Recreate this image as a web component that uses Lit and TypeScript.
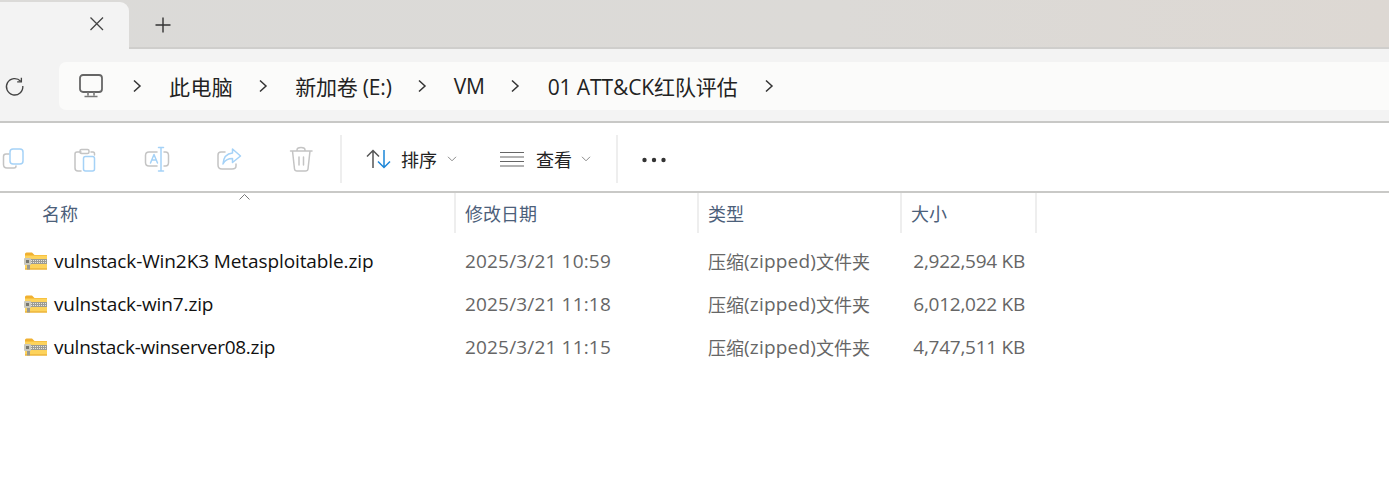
import { LitElement, html, css, svg } from "lit";
import { customElement } from "lit/decorators.js";

const chevron = html`<svg class="chev" width="10" height="14" viewBox="0 0 10 14"><path d="M2 1.5 L8 7 L2 12.5" fill="none" stroke="#333" stroke-width="1.5"/></svg>`;
const down = html`<svg class="down" width="10" height="6" viewBox="0 0 10 6"><path d="M1 .8 L5 4.8 L9 .8" fill="none" stroke="#8a8a8a" stroke-width="1"/></svg>`;
const zipIcon = html`<svg class="zip" width="24" height="20" viewBox="0 0 24 20">
  <path d="M1 3 Q1 1.5 2.5 1.5 H8 L10.5 4 H1 Z" fill="#f0b030"/>
  <rect x="1" y="4" width="22" height="14.5" fill="#fdd35c"/>
  <rect x="1" y="4" width="22" height="1" fill="#f7c140"/>
  <rect x="1" y="17.5" width="22" height="1" fill="#e3a52a"/>
  <rect x="0" y="8" width="23" height="5" fill="#9b9b94"/>
  <path d="M7 9.5 H22 M7 11.5 H22" stroke="#e8e6dc" stroke-width="1" stroke-dasharray="1 1"/>
  <rect x="0" y="7" width="7" height="7" rx="1" fill="#c9c8bd"/>
  <rect x="2" y="9" width="3" height="3" fill="#77776f"/>
  <rect x="3" y="14" width="3" height="4.5" fill="#9a9a90"/>
</svg>`;
const rows = [
  { name: "vulnstack-Win2K3 Metasploitable.zip", date: "2025/3/21 10:59", size: "2,922,594 KB", track: -0.1 },
  { name: "vulnstack-win7.zip", date: "2025/3/21 11:18", size: "6,012,022 KB", track: -0.12 },
  { name: "vulnstack-winserver08.zip", date: "2025/3/21 11:15", size: "4,747,511 KB", track: -0.27 },
];
const G = "#c4c4c4", B = "#a5d2f7";
const ic = (w: number, body: unknown) => html`<svg class="tool" width="${w}" height="28" viewBox="0 0 ${w} 28" fill="none" stroke-width="1.5" stroke-linejoin="round" stroke-linecap="round">${body}</svg>`;

@customElement("app-root")
export class AppRoot extends LitElement {
  static styles = css`
    :host { display: block; width: 1389px; height: 481px; overflow: hidden; background: #fff;
      font-family: "Open Sans", "Noto Sans CJK SC", sans-serif; color: #1a1a1a; }
    .tabs { height: 45px; padding-top: 2px; display: flex; align-items: stretch;
      background: linear-gradient(90deg, #dbdad8 0%, #dcdad7 60%, #ddd8d3 100%); border-bottom: 2px solid #cfcecc; }
    .tab { width: 129px; margin-bottom: -2px; background: #f3f3f3; border-radius: 0 9px 0 0; display: flex; align-items: center; justify-content: flex-end; padding: 0 24px 3px 0; box-sizing: border-box; }
    .plus { margin-left: 26px; align-self: center; display: flex; }
    .nav { height: 59px; padding-top: 13px; background: #f3f3f3; border-bottom: 2px solid #c8c8c6; display: flex; align-items: flex-start; }
    .refresh { width: 59px; height: 48px; padding-left: 4px; box-sizing: border-box; display: flex; align-items: center; }
    .addr { flex: 1; height: 48px; background: #fbfbfa; border-radius: 7px 0 0 7px; display: flex; align-items: center; font-size: 21px; color: #222; }
    .pc { margin-left: 20px; display: flex; }
    .crumb { white-space: nowrap; letter-spacing: -0.2px; }
    .wrap { display: flex; }
    .chev { flex: none; }
    .c1 { margin-left: 29px; } .t1 { margin-left: 27px; letter-spacing: 0.4px; }
    .c2 { margin-left: 25px; } .t2 { margin-left: 27px; }
    .c3 { margin-left: 25px; } .t3 { margin-left: 27px; }
    .c4 { margin-left: 25px; } .t4 { margin-left: 28px; letter-spacing: -0.1px; }
    .c5 { margin-left: 26px; }
    .cmd { height: 68px; border-bottom: 2px solid #c9c9c7; display: flex; align-items: center; }
    .tools { width: 340px; display: flex; align-items: center; margin-top: 6px; }
    .tool { flex: none; }
    .t-a { margin-left: 1px; } .t-b { margin-left: 48px; } .t-c { margin-left: 47px; } .t-d { margin-left: 46px; } .t-e { margin-left: 47px; }
    .sep { width: 2px; height: 48px; background: #eeeeee; flex: none; margin-top: 3px; }
    .btn { display: flex; align-items: center; font-size: 18px; color: #222; margin-top: 4px; }
    .sort { margin-left: 24px; gap: 10px; }
    .view { margin-left: 43px; gap: 11px; }
    .view .down { margin-left: -2px; }
    .sep2 { margin-left: 25px; }
    .more { margin-left: 24px; display: flex; margin-top: 6px; }
    .head, .row { display: grid; grid-template-columns: 456px 243px 203px 135px; width: 1037px; }
    .head { height: 40px; position: relative; font-size: 18px; color: #4c607a; }
    .hc { border-right: 2px solid #eeeeee; display: flex; align-items: center; padding-left: 9px; box-sizing: border-box; }
    .hc:first-child { padding-left: 42px; }
    .sort-mark { position: absolute; left: 239px; top: 1px; }
    .list { padding-top: 6px; }
    .row { height: 43px; align-items: center; font-size: 19px; }
    .name { display: flex; align-items: center; padding-left: 24px; white-space: nowrap; gap: 6px; color: #111; }
    .date, .type, .size { color: #666; white-space: nowrap; }
    .date { padding-left: 9px; letter-spacing: 0.17px; }
    .type { padding-left: 9px; display: flex; align-items: center; }
    .cjk { font-size: 18px; }
    .lat { letter-spacing: 0.2px; }
    .size { text-align: right; padding-right: 12px; letter-spacing: -0.25px; }
  `;
  render() {
    return html`
      <div class="tabs">
        <div class="tab"><svg width="16" height="16" viewBox="0 0 16 16"><path d="M1.5 1.5 L14 14 M14 1.5 L1.5 14" stroke="#444" stroke-width="1.3"/></svg></div>
        <div class="plus"><svg width="16" height="16" viewBox="0 0 16 16"><path d="M8 .5 V15.5 M.5 8 H15.5" stroke="#333" stroke-width="1.4"/></svg></div>
      </div>
      <div class="nav">
        <div class="refresh"><svg width="21" height="21" viewBox="0 0 22 22" fill="none"><path d="M17.5 5.5 A8.6 8.6 0 1 0 19.7 10.5" stroke="#444" stroke-width="1.4"/><path d="M18.2 1.8 V6.2 H13.8" stroke="#444" stroke-width="1.4"/></svg></div>
        <div class="addr">
          <span class="pc"><svg width="24" height="24" viewBox="0 0 24 24" fill="none"><rect x="1" y="1" width="22" height="17" rx="3" stroke="#666" stroke-width="1.8"/><path d="M9 18 V21.5 M15 18 V21.5 M5.5 22.5 H18.5" stroke="#777" stroke-width="1.6"/></svg></span>
          <span class="c1 wrap">${chevron}</span><span class="crumb t1">此电脑</span>
          <span class="c2 wrap">${chevron}</span><span class="crumb t2">新加卷 (E:)</span>
          <span class="c3 wrap">${chevron}</span><span class="crumb t3">VM</span>
          <span class="c4 wrap">${chevron}</span><span class="crumb t4">01 ATT&amp;CK红队评估</span>
          <span class="c5 wrap">${chevron}</span>
        </div>
      </div>
      <div class="cmd">
        <div class="tools">
          <span class="t-a wrap">${ic(24, svg`<path d="M8 8 H5 Q2.500 8 2.500 10.500 V18.500 Q2.500 22 6 22 H13 Q15 22 15 20" stroke="${G}"/><rect x="9" y="3" width="13" height="15" rx="3" stroke="${B}"/>`)}</span>
          <span class="t-b wrap">${ic(24, svg`<path d="M8 6 H4 Q2 6 2 8 V22 Q2 25 5 25 H8 M18 6 H20 Q21.500 6 21.500 8 V9" stroke="${G}"/><rect x="7" y="3.500" width="9" height="4" rx="1.500" stroke="${G}"/><rect x="10.500" y="10.500" width="11" height="14.500" rx="2" stroke="${B}"/>`)}</span>
          <span class="t-c wrap">${ic(26, svg`<path d="M13 6 H5 Q1.500 6 1.500 9.500 V16.500 Q1.500 20 5 20 H13 M20 6 H21.500 Q24.500 6 24.500 9.500 V16.500 Q24.500 20 21.500 20 H20" stroke="${G}"/><path d="M6.500 17 L10 8.500 L13.500 17 M7.800 14 H12.300 M17 1.500 V25 M14.500 1.500 H19.500 M14.500 25 H19.500" stroke="${B}"/>`)}</span>
          <span class="t-d wrap">${ic(26, svg`<path d="M9 6 H5 Q2 6 2 9 V19 Q2 23 6 23 H16 Q20 23 20 20 V18" stroke="${G}"/><path d="M16.500 3 L24.500 10 L16.500 16.500 V12.500 C12 12.500 9 14 7 18 C7.500 11 11 7.500 16.500 7 Z" stroke="${B}"/>`)}</span>
          <span class="t-e wrap">${ic(24, svg`<path d="M1.500 5 H23 M8 5 V4 Q8 1.500 12 1.500 Q16 1.500 16 4 V5 M3.500 5 L5.500 23 Q5.800 25 8 25 H16.500 Q18.700 25 19 23 L21 5 M10 11 V19 M14.500 11 V19" stroke="${G}"/>`)}</span>
        </div>
        <div class="sep"></div>
        <div class="btn sort">
          <svg width="25" height="20" viewBox="0 0 25 20" fill="none"><path d="M7 19 V1.500 M1 7.500 L7 1.500 L13 7.500" stroke="#555" stroke-width="1.500"/><path d="M18 1 V18.500 M12 12.500 L18 18.500 L24 12.500" stroke="#1d86d8" stroke-width="1.500"/></svg>
          <span>排序</span>${down}
        </div>
        <div class="btn view">
          <svg width="25" height="16" viewBox="0 0 25 16" fill="none"><path d="M0 1.500 H24 M0 6 H24 M0 10.500 H24 M0 15 H24" stroke="#666" stroke-width="1.200"/></svg>
          <span>查看</span>${down}
        </div>
        <div class="sep sep2"></div>
        <div class="more"><svg width="24" height="6" viewBox="0 0 24 6"><circle cx="2.500" cy="3" r="2.200" fill="#333"/><circle cx="12" cy="3" r="2.200" fill="#333"/><circle cx="21.500" cy="3" r="2.200" fill="#333"/></svg></div>
      </div>
      <div class="head">
        <div class="hc">名称</div><div class="hc">修改日期</div><div class="hc">类型</div><div class="hc">大小</div>
        <svg class="sort-mark" width="11" height="6" viewBox="0 0 11 6"><path d="M.5 5.500 L5.500 .5 L10.500 5.500" fill="none" stroke="#777" stroke-width="1"/></svg>
      </div>
      <div class="list">
        ${rows.map((r) => html`<div class="row">
          <div class="name">${zipIcon}<span style="letter-spacing:${r.track}px">${r.name}</span></div>
          <div class="date">${r.date}</div>
          <div class="type"><span class="cjk">压缩</span><span class="lat">(zipped)</span><span class="cjk">文件夹</span></div>
          <div class="size">${r.size}</div>
        </div>`)}
      </div>
    `;
  }
}
